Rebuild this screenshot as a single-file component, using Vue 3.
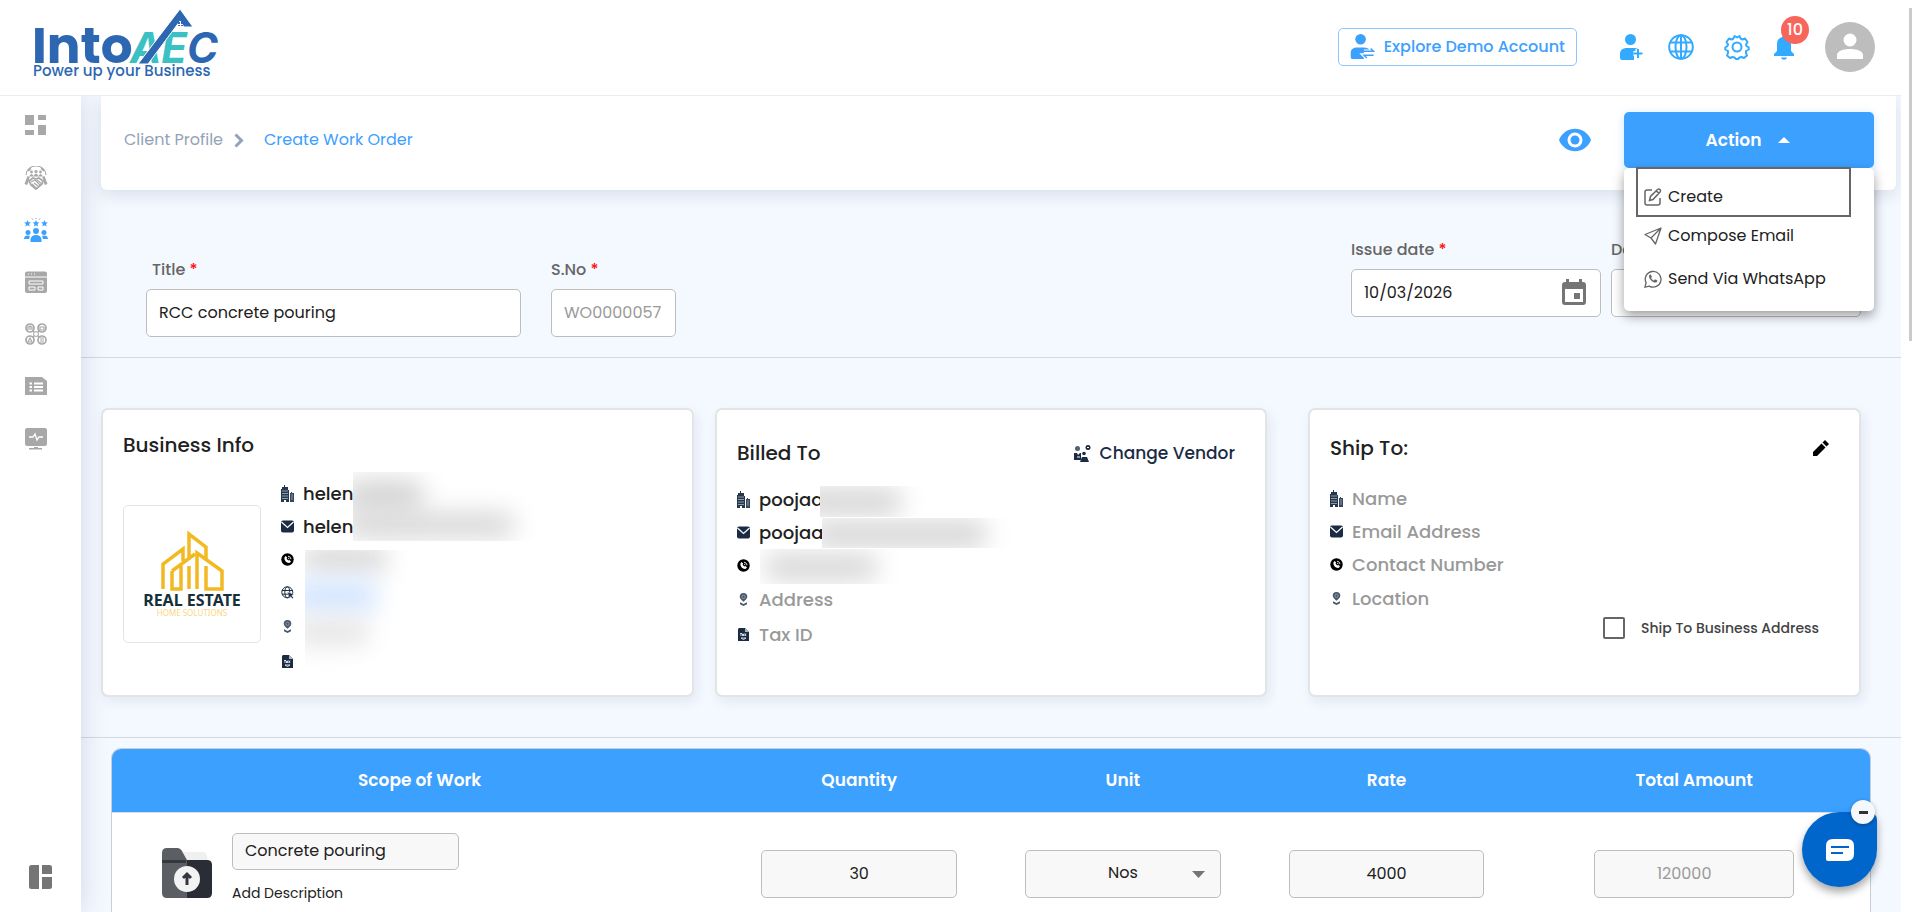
<script setup>
import { ref } from 'vue'

const title = ref('RCC concrete pouring')
const serial = ref('WO0000057')
const issueDate = ref('10/03/2026')
const dueDate = ref('')
const shipToBusiness = ref(false)
const item = ref({ name: 'Concrete pouring', quantity: '30', unit: 'Nos', rate: '4000', total: '120000' })

const business = [
  { icon: 'building', text: 'helen' },
  { icon: 'mail', text: 'helen' },
  { icon: 'phone', text: '' },
  { icon: 'web', text: '' },
  { icon: 'pin', text: '' },
  { icon: 'tax', text: '' },
]
const billed = [
  { icon: 'building', text: 'poojaa', cover: 'name' },
  { icon: 'mail', text: 'poojaa', cover: 'email' },
  { icon: 'phone', text: '', cover: 'tel' },
  { icon: 'pin', text: 'Address', empty: true },
  { icon: 'tax', text: 'Tax ID', empty: true },
]
const shipping = [
  { icon: 'building', text: 'Name' },
  { icon: 'mail', text: 'Email Address' },
  { icon: 'phone', text: 'Contact Number' },
  { icon: 'pin', text: 'Location' },
]
const navigation = [
  { id: 'dashboard', label: 'Dashboard' },
  { id: 'partners', label: 'Partners' },
  { id: 'clients', label: 'Clients', active: true },
  { id: 'projects', label: 'Projects' },
  { id: 'network', label: 'Network' },
  { id: 'reports', label: 'Reports' },
  { id: 'monitor', label: 'Monitor' },
]
</script>

<template>
  <div class="app">
    <svg class="sprite" aria-hidden="true">
      <symbol id="i-building" viewBox="0 0 13 18">
        <path d="M3 2V0h1v2h3v3h1v12H0V4h1V2z" fill="#26374d" />
        <path d="M9 8h1V7h1v1h2v9H9z" fill="#34475d" />
        <path d="M1 6h6M1 8.5h6M1 11h6M1 13.5h6M10 10h2M10 12h2M10 14h2" stroke="#8f9caa" />
        <path d="M3 17v-2h2v2z" fill="#fff" />
      </symbol>
      <symbol id="i-mail" viewBox="0 0 13 13">
        <rect width="13" height="12" y=".5" rx="2" fill="#1b2b44" />
        <path d="M.5 2 6.5 7.5 12.5 2" fill="none" stroke="#fff" stroke-width="1.2" />
      </symbol>
      <symbol id="i-phone" viewBox="0 0 13 13">
        <circle cx="6.5" cy="6.5" r="6.2" fill="#000" />
        <path d="M3.5 4.2 4.8 3l1.400 1.700-.7 1L7.300 7.600l1-.6L10 8.300 8.900 9.800C6 10.500 2.800 7.500 3.500 4.200z" fill="#fff" />
        <path d="M7 3.300c1.700 0 2.800 1.200 2.900 2.900M7 5.100q1 .1 1.100 1.100" fill="none" stroke="#fff" stroke-width=".9" />
      </symbol>
      <symbol id="i-web" viewBox="0 0 13 13">
        <circle cx="6.3" cy="6.3" r="5.5" fill="none" stroke="#1b2b44" />
        <ellipse cx="6.3" cy="6.3" rx="2.5" ry="5.5" fill="none" stroke="#1b2b44" />
        <path d="M1 4.5h10.5M1 8.2h10" stroke="#1b2b44" />
        <path d="m6.500 6 6.500 2.400-2.400 1.200 1.800 2.200-1 .9-1.900-2.200-1 2z" fill="#1b2b44" stroke="#fff" stroke-width=".4" />
      </symbol>
      <symbol id="i-pin" viewBox="0 0 13 13">
        <path d="M6.500 8.800C4.500 7 2.700 5.400 2.700 3.800a3.800 3.800 0 0 1 7.600 0c0 1.600-1.800 3.200-3.800 5z" fill="#4a586b" />
        <circle cx="6.500" cy="3.800" r="1.700" fill="none" stroke="#a6afba" stroke-width=".7" />
        <path d="M3 9.300 6.500 11 10 9.300v2L6.500 13 3 11.300z" fill="#4a586b" />
      </symbol>
      <symbol id="i-tax" viewBox="0 0 13 13">
        <path d="M2 0h6l4 4v9H1V1z" fill="#1b2b44" />
        <path d="M8 0v4h4z" fill="#aeb7c2" />
        <path d="M3 5.500h2M4 5.500V8M5.500 8V6h1v2M7.500 5.500 9 8M9 5.500 7.500 8M4 10h5l-2.500 1.500z" stroke="#fff" stroke-width=".8" fill="none" />
      </symbol>
      <symbol id="i-person" viewBox="0 0 24 26">
        <circle cx="10.500" cy="5.500" r="5.500" fill="currentColor" />
        <path d="M0 20c0-4 3-6 7-6h7c3 0 5 1 6 3l-6 1v8H2q-2 0-2-2z" fill="currentColor" />
      </symbol>
    </svg>

    <header class="topbar">
      <a class="brand" href="#" aria-label="IntoAEC home">
        <svg viewBox="0 0 190 72" width="190" height="72">
          <text class="logo-main" x="0" y="55" fill="#2d67b2">Into</text>
          <text class="logo-aec" x="98" y="55"><tspan fill="#3bc1c4">AE</tspan><tspan fill="#2d67b2">C</tspan></text>
          <path d="M106 56 148 1l13 18h-9l-4-6-32 43z" fill="#2d67b2" stroke="#fff" stroke-width="1" />
          <path d="M146 14h2v2h-2zM149 14h2v2h-2zM146 17h2v1h-2zM149 17h2v1h-2z" fill="#2d67b2" />
          <text class="logo-tag" x="1" y="68" fill="#2d67b2">Power up your Business</text>
        </svg>
      </a>
      <div class="top-actions">
        <button class="demo" type="button">
          <svg width="25" height="25" viewBox="0 0 25 26">
            <use href="#i-person" width="24" height="26" />
            <path d="M14 18h10l-3-3M24 22H14l3 3" fill="none" stroke="#fff" stroke-width="4" />
            <path d="M14 18h10l-3-3M24 22H14l3 3" fill="none" stroke="#3ca0ff" stroke-width="1.500" />
          </svg>
          Explore Demo Account
        </button>
        <button class="icon-button add-user" type="button" aria-label="Add user">
          <svg width="24" height="26" viewBox="0 0 24 26">
            <use href="#i-person" width="24" height="26" />
            <path d="M18 15v9M13.500 19.500h9" stroke="#fff" stroke-width="5" />
            <path d="M18 15v9M13.500 19.500h9" stroke="currentColor" stroke-width="2" />
          </svg>
        </button>
        <button class="icon-button globe" type="button" aria-label="Language">
          <svg width="26" height="26" viewBox="0 0 26 26" fill="none" stroke="currentColor" stroke-width="2">
            <circle cx="13" cy="13" r="11.800" /><ellipse cx="13" cy="13" rx="5.500" ry="11.800" />
            <path d="M13 1v24M2.500 8.500h21M2.500 17.500h21" />
          </svg>
        </button>
        <button class="icon-button gear" type="button" aria-label="Settings">
          <svg width="26" height="26" viewBox="0 0 26 26" fill="none" stroke="currentColor" stroke-width="2">
            <circle cx="13" cy="13" r="4.500" />
            <path stroke-linejoin="round" d="M10.500 2 9.500 4.500 7.500 5.500 5 4.500 2.500 8 4 10.500 3.500 12 1.300 13.500v2L4 17l0 2-1 2.500 3 2.500 2.500-1 2 .5 1.500 1.500h2l1.500-1.500 2-.5 2.500 1 3-2.500-1-2.500v-2l2.700-1.500v-2L22.500 12 22 10.500 23.500 8 21 4.500l-2.500 1-2-1L15.500 2 13 3.500z" />
          </svg>
        </button>
        <button class="icon-button bell" type="button" aria-label="Notifications, 10 new">
          <svg width="20" height="26" viewBox="0 0 20 26" fill="currentColor">
            <path d="M0 22v-2l3-3v-7c0-4 2-6 5.500-7V0h3v3C15 4 17 6 17 10v7l3 3v2zM7 23.500h6c-1 3-5 3-6 0z" />
          </svg>
          <span class="badge">10</span>
        </button>
        <button class="avatar" type="button" aria-label="Account">
          <svg width="30" height="30" viewBox="0 0 30 30" fill="#fff">
            <circle cx="15" cy="8" r="6.500" /><path d="M2 27v-4c0-8 26-8 26 0v4z" />
          </svg>
        </button>
      </div>
    </header>

    <nav class="sidebar" aria-label="Main">
      <a v-for="entry in navigation" :key="entry.id" href="#" :class="{ active: entry.active }" :aria-label="entry.label">
        <svg width="24" height="24" viewBox="0 0 24 24" fill="currentColor">
          <path v-if="entry.id === 'dashboard'" d="M1 1h9v10H1zM14 1h8v5h-8zM14 11h8v10h-8zM1 16h9v5H1z" />
          <g v-else-if="entry.id === 'partners'">
            <path d="M2 9a10 9 0 0 1 20 0M4.500 5l2.500-2.500M17 2.500 20 5" fill="none" stroke="currentColor" stroke-width="1.200" />
            <circle cx="7.500" cy="6" r="1.400" /><circle cx="12" cy="5.500" r="1.600" /><circle cx="16.500" cy="6" r="1.400" />
            <path d="M5 10.500q2.500-5 5 0zM9.500 10.500q2.500-6 5 0zM14 10.500q2.500-5 5 0zM.500 18 3.500 10l2.200 1-2.400 8zM23.500 18 20.500 10l-2.200 1 2.400 8z" />
            <path d="m5 15 4-3 3 1 3-1 4 3-1 3-6 5-5-4z" fill="none" stroke="currentColor" stroke-width="1.800" />
            <path d="m7 16 4-2 5 5M8 18l4 4M13 14l5 4M10 17l4 3" fill="none" stroke="currentColor" stroke-width="1.200" />
          </g>
          <g v-else-if="entry.id === 'clients'">
            <path d="m3.500 2 1 2.300 2.500.2-2 1.600.7 2.500L3.500 7.200 1.300 8.600 2 6.100 0 4.500l2.500-.2zM12 2l1 2.300 2.500.2-2 1.600.7 2.500L12 7.200 9.800 8.600l.7-2.500-2-1.600 2.500-.2zM20.500 2l1 2.300 2.500.2-2 1.600.7 2.500-2.200-1.400-2.200 1.400.7-2.500-2-1.600 2.500-.2z" />
            <path d="m8 .500 1 1.200M16 .500l-1 1.200M12 0v1" stroke="currentColor" />
            <circle cx="4" cy="14.500" r="2.500" /><circle cx="12" cy="13" r="3" /><circle cx="20" cy="14.500" r="2.500" />
            <path d="M0 21c0-4 4-4 6-3l-1 3zM24 21c0-4-4-4-6-3l1 3zM6.500 24v-3q1-4 5.500-4t5.500 4v3z" />
          </g>
          <g v-else-if="entry.id === 'projects'">
            <path d="M3 1.500h18q2 0 2 2V21q0 2-2 2H3q-2 0-2-2V3.500q0-2 2-2z" />
            <path d="M1 7h22M5 11h14v3H5zM5 17h6v3H5zM14 17h5v3h-5z" fill="none" stroke="#fff" /><path d="M4 4h1M7 4h1M10 4h1" stroke="#fff" />
          </g>
          <g v-else-if="entry.id === 'network'" fill="none" stroke="currentColor" stroke-width="1.700">
            <circle cx="6" cy="6" r="4" /><circle cx="18" cy="6" r="4" /><circle cx="6" cy="18" r="4" /><circle cx="18" cy="18" r="4" />
            <circle cx="12" cy="12" r="2.500" stroke-width="1" />
            <path stroke-width="1.200" d="M4 8V5l2-1 2 1v3M6 5v3M16 8V5h4v3zM4 20l2-4 2 4zM16 16h4M16 18h4M16 20h4M8.500 8.500l2 2M15.500 8.500l-2 2M8.500 15.500l2-2M15.500 15.500l-2-2" />
          </g>
          <g v-else-if="entry.id === 'reports'">
            <path d="M1 3h17l5 4v14H1z" /><path d="M5.500 9.500H8M10 9.500h9M5.500 13H8M10 13h9M5.500 16.500H8M10 16.500h9" stroke="#fff" stroke-width="1.800" />
          </g>
          <g v-else>
            <path d="M3 2h18q2 0 2 2v14q0 2-2 2H3q-2 0-2-2V4q0-2 2-2zM10 21h4v1h4v1.500H5V22h5z" />
            <path d="M5 11h4l2-3 2 6 2-3h4" fill="none" stroke="#fff" stroke-width="1.300" />
          </g>
        </svg>
      </a>
      <button class="panel-toggle" type="button" aria-label="Toggle panel">
        <svg width="24" height="26" viewBox="0 0 24 26" fill="#757575">
          <path d="M2.500 1H10v24H2.500Q0 25 0 22.500v-19Q0 1 2.500 1zM13 1h7.500Q23 1 23 3.500V10H13zM13 13h10v9.500q0 2.500-2.500 2.500H13z" />
        </svg>
      </button>
    </nav>

    <main class="content">
      <section class="subbar">
        <nav class="crumbs" aria-label="Breadcrumb">
          <a href="#">Client Profile</a>
          <svg width="10" height="15" viewBox="0 0 10 15"><path d="m1.500 1.500 6 6-6 6" fill="none" stroke="#94a3b8" stroke-width="3" /></svg>
          <a class="current" href="#" aria-current="page">Create Work Order</a>
        </nav>
        <button class="preview" type="button" aria-label="Preview">
          <svg width="32" height="24" viewBox="0 0 32 24">
            <path d="M0 12C6-3 26-3 32 12 26 27 6 27 0 12z" fill="#3ca0ff" /><circle cx="16" cy="12" r="7.500" fill="#fff" /><circle cx="16" cy="12" r="4.500" fill="#3ca0ff" />
          </svg>
        </button>
        <div class="action-wrap">
          <button class="action" type="button" aria-haspopup="menu" aria-expanded="true">
            Action
            <svg width="12" height="6" viewBox="0 0 12 6"><path d="m0 6 6-6 6 6z" fill="#fff" /></svg>
          </button>
          <div class="menu" role="menu">
            <button class="focused" type="button" role="menuitem">
              <svg width="18" height="18" viewBox="0 0 18 18" fill="none" stroke="#666" stroke-width="1.500">
                <path d="M8 2H3Q1 2 1 4v11q0 2 2 2h11q2 0 2-2v-5M5.500 12.500l1-4L13.500 1.500q1.500-1 2.500 0t0 2.500L9 11.500zM12.500 3l2.500 2.500" />
              </svg>
              Create
            </button>
            <button type="button" role="menuitem">
              <svg width="18" height="18" viewBox="0 0 18 18" fill="none" stroke="#666" stroke-width="1.300" stroke-linejoin="round"><path d="M17 1 1 7.500l6 3.500 4.500 6zM7 11l10-10" /></svg>
              Compose Email
            </button>
            <button type="button" role="menuitem">
              <svg width="18" height="18" viewBox="0 0 19 19">
                <path d="m1 18 1.200-4.500A8.300 8.300 0 1 1 5.500 17z" fill="none" stroke="#666" stroke-width="1.400" />
                <path d="M6.500 4.800c-2 .8-1.300 3.700.8 6 2.400 2.500 5.700 3.500 6.700 1.200l.1-1-2.500-1.200-1.200 1.300c-1.300-.5-2.200-1.400-2.900-2.700l.8-1.200-1-2.300z" fill="#666" />
              </svg>
              Send Via WhatsApp
            </button>
          </div>
        </div>
      </section>

      <form class="order-head" @submit.prevent>
        <div class="field-group lower">
          <div class="field title-field">
            <label for="title">Title <b>*</b></label>
            <input id="title" v-model="title" type="text" />
          </div>
          <div class="field serial-field">
            <label for="serial">S.No <b>*</b></label>
            <input id="serial" v-model="serial" type="text" disabled />
          </div>
        </div>
        <div class="field-group dates">
          <div class="field date-field">
            <label for="issue">Issue date <b>*</b></label>
            <div class="date-box">
              <input id="issue" v-model="issueDate" type="text" />
              <button type="button" aria-label="Choose issue date">
                <svg width="24" height="26" viewBox="0 0 24 26"><path d="M4 0h3v3h10V0h3v3h1q3 0 3 3v17q0 3-3 3H3q-3 0-3-3V6q0-3 3-3h1zM3 10v13h18V10zM12 14h6v6h-6z" fill="#757575" fill-rule="evenodd" /></svg>
              </button>
            </div>
          </div>
          <div class="field date-field">
            <label for="due">Date</label>
            <input id="due" v-model="dueDate" type="text" />
          </div>
        </div>
      </form>

      <section class="cards">
        <article class="card business">
          <h2>Business Info</h2>
          <div class="business-body">
            <div class="company-logo">
              <svg width="136" height="136" viewBox="1 1 136 136">
                <path d="M40 84V59l20-15v12M49 66l23-17M49 66v18h9V61M66 53V29l17 13v12M66 61v23M74 84V48l25 18v18H83V61" fill="none" stroke="#f2b922" stroke-width="3.500" />
                <text class="estate" x="69" y="101" text-anchor="middle" fill="#14303a">REAL ESTATE</text>
                <text class="solutions" x="69" y="111" text-anchor="middle" fill="#f8d784">HOME SOLUTIONS</text>
              </svg>
            </div>
            <ul class="contacts">
              <li v-for="row in business" :key="row.icon"><svg><use :href="'#i-' + row.icon" /></svg>{{ row.text }}</li>
              <li class="veil veil-names" aria-hidden="true"><i></i><i></i></li>
              <li class="veil veil-details" aria-hidden="true"><i></i><i></i><i></i></li>
            </ul>
          </div>
        </article>

        <article class="card billed">
          <div class="card-head">
            <h2>Billed To</h2>
            <button class="change" type="button">
              <svg width="17" height="17" viewBox="0 0 17 17" fill="#1b2b44">
                <circle cx="3.500" cy="3.500" r="2.500" fill="#526173" /><circle cx="14" cy="2.500" r="2.500" /><circle cx="10" cy="8.500" r="1.800" />
                <path d="M0 8h3l1 2 2-2h1v7H0zM6 17l2-5h5l2 5z" /><path d="M3 12h3M13 2.500h2" stroke="#fff" />
              </svg>
              Change Vendor
            </button>
          </div>
          <ul class="contacts">
            <li v-for="row in billed" :key="row.icon" :class="{ muted: row.empty }">
              <svg><use :href="'#i-' + row.icon" /></svg>{{ row.text }}
              <span v-if="row.cover" class="veil" :class="'veil-' + row.cover" aria-hidden="true"><i></i></span>
            </li>
          </ul>
        </article>

        <article class="card ship">
          <div class="card-head">
            <h2>Ship To:</h2>
            <button class="edit" type="button" aria-label="Edit shipping address">
              <svg width="16" height="16" viewBox="0 0 16 16"><path d="M0 16v-4l8.500-8.500 4 4L4 16zM9.500 2.500 12 0l4 4-2.500 2.500z" /></svg>
            </button>
          </div>
          <ul class="contacts">
            <li v-for="row in shipping" :key="row.icon" class="muted"><svg><use :href="'#i-' + row.icon" /></svg>{{ row.text }}</li>
          </ul>
          <label class="same-address"><input v-model="shipToBusiness" type="checkbox" />Ship To Business Address</label>
        </article>
      </section>

      <table class="items">
        <thead>
          <tr><th class="scope">Scope of Work</th><th class="narrow">Quantity</th><th class="narrow">Unit</th><th class="narrow">Rate</th><th>Total Amount</th></tr>
        </thead>
        <tbody>
          <tr>
            <td>
              <div class="scope-cell">
                <button class="folder" type="button" aria-label="Upload file">
                  <svg width="50" height="50" viewBox="0 0 50 50">
                    <path d="M20 4h20q4 0 5 4l1 8H20z" fill="#f0f0f0" />
                    <path d="M25 12h20q5 0 5 5v28q0 5-5 5H25z" fill="#2b2d36" />
                    <path d="M0 5q0-5 5-5h10q4 0 6 5l4 7v38H5q-5 0-5-5z" fill="#5b5f63" />
                    <path d="M0 12h24v3H0z" fill="#34373d" />
                    <circle cx="25" cy="31" r="13" fill="#f3f3f3" />
                    <path d="M25 37V26M21 30l4-4 4 4" fill="none" stroke="#34373d" stroke-width="3" />
                  </svg>
                </button>
                <div class="scope-text">
                  <input v-model="item.name" type="text" aria-label="Scope of work" />
                  <button type="button">Add Description</button>
                </div>
              </div>
            </td>
            <td><input v-model="item.quantity" class="amount" type="text" aria-label="Quantity" /></td>
            <td>
              <div class="select-box">
                <select v-model="item.unit" class="amount" aria-label="Unit"><option>Nos</option></select>
                <svg width="13" height="7" viewBox="0 0 13 7"><path d="M0 0h13L6.500 7z" fill="#757575" /></svg>
              </div>
            </td>
            <td><input v-model="item.rate" class="amount" type="text" aria-label="Rate" /></td>
            <td><input v-model="item.total" class="amount total" type="text" aria-label="Total amount" disabled /></td>
          </tr>
        </tbody>
      </table>
    </main>

    <div class="chat">
      <button class="chat-open" type="button" aria-label="Open chat">
        <svg width="28" height="22" viewBox="0 0 28 22"><path d="M7 0h14q7 0 7 7v8q0 7-7 7H2q-2 0-2-2V7q0-7 7-7z" fill="#fff" /><path d="M5 8h18M5 14h12" stroke="#06c" stroke-width="2" /></svg>
      </button>
      <button class="chat-hide" type="button" aria-label="Minimise chat"><i></i></button>
    </div>
    <div class="scroll-thumb" aria-hidden="true"></div>
  </div>
</template>

<style>
body { background: #fff; overflow: hidden; }
</style>

<style scoped>
* { box-sizing: border-box; }
.app {
  position: relative;
  display: grid;
  grid-template-columns: 81px minmax(0, 1fr);
  grid-template-rows: 96px minmax(0, 1fr);
  height: 100vh;
  padding-right: 19px;
  color: #212121;
  font: 16px/24px Poppins, Inter, "Liberation Sans", sans-serif;
}
.sprite { position: absolute; width: 0; height: 0; }
button, input, select { font: inherit; color: inherit; }
button { display: flex; align-items: center; padding: 0; border: 0; background: none; cursor: pointer; }
a { text-decoration: none; color: inherit; }
svg { display: block; flex: none; }
h2 { margin: 0; font-size: 20px; line-height: 28px; font-weight: 500; }

.topbar { grid-column: 1 / -1; display: flex; justify-content: space-between; border-bottom: 1px solid #ececec; background: #fff; z-index: 2; }
.brand { padding: 8px 0 0 32px; }
.logo-main { font: 700 50px Poppins, Inter, sans-serif; }
.logo-aec { font: italic 700 42px Inter, sans-serif; }
.logo-tag { font: 500 15px Poppins, Inter, sans-serif; }
.top-actions { display: flex; align-items: center; padding: 0 26px 2px 0; color: #32aaff; }
.demo { height: 38px; padding: 0 11px; gap: 9px; margin-right: 43px; border: 1px solid #8cc6ff; border-radius: 5px; color: #3ca0ff; font-weight: 500; white-space: nowrap; }
.add-user { margin-right: 24px; }
.globe { margin-right: 30px; }
.gear { margin-right: 24px; }
.bell { position: relative; margin-right: 31px; }
.badge { position: absolute; left: 7px; top: -18px; width: 28px; height: 28px; border-radius: 50%; background: #f8655a; color: #fff; line-height: 28px; font-weight: 500; text-align: center; }
.avatar { width: 50px; height: 50px; border-radius: 50%; background: #bdbdbd; justify-content: center; }

.sidebar { display: flex; flex-direction: column; align-items: center; gap: 28px; padding: 18px 10px 22px 0; background: #fff; color: #a8a8a8; box-shadow: 0 0 28px rgba(60, 90, 130, .2); z-index: 1; }
.sidebar .active { color: #3ca0ff; }
.panel-toggle { margin-top: auto; margin-left: 10px; }

.content { background: #f4f8ff; overflow: hidden; }
.subbar { position: relative; z-index: 3; display: flex; align-items: center; height: 94px; margin: 0 5px 0 20px; padding: 0 22px 6px 23px; border-radius: 0 0 6px 6px; background: #fff; box-shadow: 0 5px 16px rgba(40, 70, 90, .13); }
.crumbs { display: flex; align-items: center; gap: 11px; color: #94a3b8; }
.crumbs .current { margin-left: 9px; color: #3ca0ff; }
.preview { margin: 0 33px 0 auto; }
.action-wrap { position: relative; width: 250px; }
.action { width: 100%; height: 56px; justify-content: center; gap: 17px; padding-right: 2px; border-radius: 5px; background: #3ca0ff; color: #fff; font-size: 17px; font-weight: 600; box-shadow: 0 2px 10px rgba(60, 160, 255, .25); }
.menu { position: absolute; top: 56px; left: 0; right: 0; height: 143px; padding: 0 23px 0 12px; border-radius: 5px; background: #fff; box-shadow: 0 5px 12px rgba(0, 0, 0, .38); }
.menu button { width: 100%; height: 43px; padding-left: 8px; gap: 6px; white-space: nowrap; }
.menu .focused { height: 50px; padding: 9px 0 0 6px; margin-top: -1px; margin-bottom: -3px; border: 2px solid #666; }

.order-head { display: flex; justify-content: space-between; padding: 48px 40px 20px 65px; border-bottom: 1px solid #d3d9df; }
.field-group { display: flex; gap: 30px; }
.lower { padding-top: 20px; }
.dates { gap: 10px; }
.field { display: flex; flex-direction: column; gap: 7px; }
.field label { color: #666; font-weight: 500; }
.field b { color: #f11; font-weight: 500; }
.title-field label { padding-left: 6px; }
.title-field { width: 375px; }
.serial-field { width: 125px; }
.date-field { width: 250px; }
input[type="text"], select { width: 100%; height: 48px; padding: 0 12px 2px; border: 1px solid #bdbdbd; border-radius: 5px; background: #fff; outline: 0; }
input:disabled { color: #9a9a9a; }
.date-box { position: relative; }
.date-box button { position: absolute; right: 15px; top: 10px; }

.cards { display: grid; grid-template-columns: 593fr 552fr 573fr; gap: 21px; padding: 50px 40px 40px 20px; border-bottom: 1px solid #d3d9df; }
.card { min-width: 0; min-height: 289px; border: 2px solid #e3e4e5; border-radius: 7px; background: #fff; box-shadow: 3px 5px 12px rgba(40, 70, 90, .08); padding: 0 20px; }
.business { padding-top: 21px; }
.billed { padding-top: 29px; }
.ship { margin-left: 20px; padding-top: 24px; }
.card-head { display: flex; align-items: center; justify-content: space-between; padding-right: 10px; }
.business-body { display: flex; align-items: flex-start; gap: 20px; margin-top: 18px; }
.company-logo { width: 138px; height: 138px; margin-top: 28px; border: 1px solid #e3e4e5; border-radius: 5px; }
.estate { font: 700 16px "Noto Sans", sans-serif; }
.solutions { font: 400 8px "Noto Sans", sans-serif; }
.contacts { position: relative; list-style: none; margin: 0; padding: 0; font-size: 18px; font-weight: 500; }
.contacts li { position: relative; display: flex; align-items: center; gap: 9px; height: 33px; }
.contacts li:nth-child(n+4) { height: 35px; }
.business .contacts li:nth-child(4) { height: 33px; }
.contacts svg { width: 13px; height: 13px; }
.contacts li:first-child svg { height: 18px; }
.contacts .muted { color: #999; }
.billed .contacts { margin-top: 16px; }
.ship .contacts { margin-top: 20px; }
.change { gap: 9px; color: #1b2b44; font-size: 17px; font-weight: 500; }
.contacts .veil, .contacts li.veil { position: absolute; display: block; overflow: hidden; background: #fff; }
.veil i { position: absolute; border-radius: 12px; background: #d8d8d8; filter: blur(12px); }
.contacts li.veil-names { left: 72px; top: -5px; width: 190px; height: 69px; }
.veil-names i:nth-child(1) { left: -8px; top: 6px; width: 78px; height: 38px; }
.veil-names i:nth-child(2) { left: -8px; top: 40px; width: 170px; height: 26px; }
.contacts li.veil-details { left: 24px; top: 73px; width: 110px; height: 132px; }
.veil-details i:nth-child(1) { left: -4px; top: -4px; width: 87px; height: 26px; }
.veil-details i:nth-child(2) { left: -14px; top: 29px; width: 86px; height: 34px; background: #d5e6ff; }
.veil-details i:nth-child(3) { left: -14px; top: 68px; width: 78px; height: 28px; background: #e6e6e6; }
.veil-name { left: 83px; top: 3px; width: 110px; height: 31px; }
.veil-email { left: 85px; top: 2px; width: 190px; height: 30px; }
.veil-tel { left: 23px; top: 0; width: 140px; height: 35px; }
.veil-name i { left: -20px; top: 1px; width: 102px; height: 30px; }
.veil-email i { left: -10px; top: 1px; width: 175px; height: 30px; }
.veil-tel i { left: 4px; top: 4px; width: 114px; height: 28px; }
.same-address { display: flex; align-items: center; justify-content: flex-end; gap: 16px; padding-right: 20px; color: #424242; font-size: 14px; font-weight: 500; }
.same-address input { appearance: none; width: 22px; height: 22px; margin: 0; border: 2px solid #666; border-radius: 2px; }

.items { width: calc(100% - 60px); margin: 10px 30px 0; table-layout: fixed; border: 1px solid #c8ced4; border-radius: 10px 10px 0 0; border-spacing: 0; overflow: hidden; background: #fff; }
.items th { height: 64px; padding: 0 0 2px; background: #3ca0ff; color: #fff; font-size: 17px; font-weight: 600; border-bottom: 1px solid #d8dde2; }
.scope { width: 35%; }
.narrow { width: 15%; }
.items td { height: 122px; padding: 37px 34px 0; vertical-align: top; }
.items td:first-child { padding: 20px 50px 0; }
.items td:last-child { padding: 37px 76px 0; }
.items .amount { text-align: center; text-align-last: center; background: #f8f8f8; }
.items .total { padding-right: 32px; }
.scope-cell { display: flex; gap: 20px; }
.folder { margin-top: 15px; align-self: flex-start; }
.scope-text { width: 227px; }
.scope-text input { height: 37px; background: #f8f8f8; }
.scope-text button { margin-top: 11px; font-size: 14px; }
.select-box { position: relative; }
.select-box select { appearance: none; }
.select-box svg { position: absolute; right: 16px; top: 21px; pointer-events: none; }

.chat { position: absolute; right: 43px; bottom: 25px; z-index: 5; }
.chat-open { width: 75px; height: 75px; justify-content: center; border-radius: 50% 8px 50% 50%; background: #06c; box-shadow: 0 5px 8px rgba(0, 0, 0, .35); }
.chat-hide { position: absolute; right: 2px; top: -12px; width: 24px; height: 24px; justify-content: center; border-radius: 50%; background: #f4f7fb; box-shadow: 0 1px 4px rgba(0, 0, 0, .3); }
.chat-hide i { width: 9px; height: 3px; background: #333; }
.scroll-thumb { position: absolute; right: 8px; top: 8px; width: 3px; height: 333px; background: #cbcbcb; }
</style>
